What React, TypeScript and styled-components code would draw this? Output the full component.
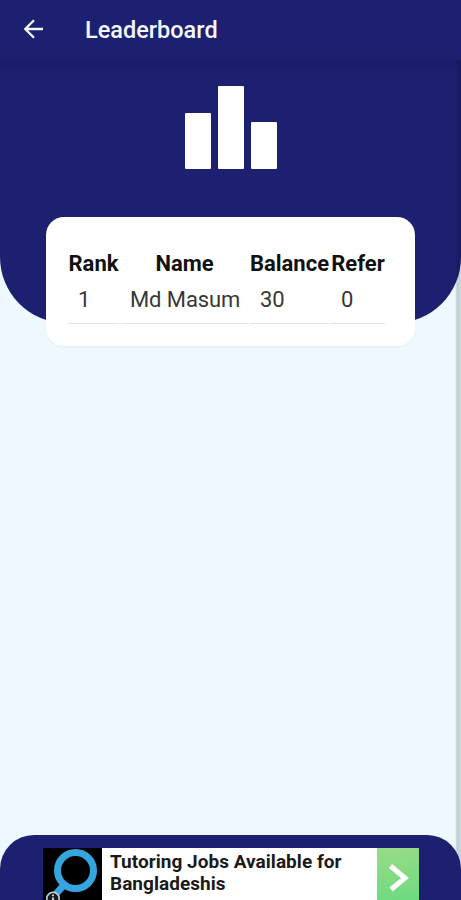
import React from "react";
import styled, { createGlobalStyle } from "styled-components";

const NAVY = "#1d1f70";

const GlobalStyle = createGlobalStyle`
  * { box-sizing: border-box; }
  body { margin: 0; background: #eef8ff; font-family: Roboto, sans-serif; overflow: hidden; }
`;

const Screen = styled.div`
  height: 900px;
  overflow: hidden;
  display: flex;
  flex-direction: column;
  background: linear-gradient(90deg, #eef8ff 455px, #c0d1d4 457px, #c9d9da 461px);
`;

const AppBar = styled.header`
  flex: none;
  height: 60px;
  display: flex;
  align-items: center;
  padding: 0 0 1px 22px;
  background: ${NAVY};
  color: #f3f7ff;
`;

const BackButton = styled.button`
  display: flex;
  padding: 0;
  margin: -2px 41px 0 0;
  border: 0;
  background: none;
  color: inherit;
`;

const Title = styled.h1`
  margin: 0;
  font-size: 23.5px;
  font-weight: 500;
  line-height: 28px;
`;

const Hero = styled.section`
  flex: none;
  height: 263px;
  padding-top: 26px;
  display: flex;
  justify-content: center;
  align-items: flex-start;
  border-radius: 0 0 66px 66px;
  background:
    linear-gradient(90deg, transparent 455px, rgba(15, 16, 70, 0.35) 458px),
    linear-gradient(180deg, #1b1d6b 0, ${NAVY} 14px);
`;

const Podium = styled.div`
  display: flex;
  align-items: flex-end;
  gap: 7px;
  height: 83px;
`;

const Bar = styled.span<{ $height: number }>`
  width: 26px;
  height: ${({ $height }) => $height}px;
  border-radius: 1px;
  background: #fff;
`;

const Card = styled.section`
  flex: none;
  width: 369px;
  height: 129px;
  margin: -106px 0 0 46px;
  padding: 32px 0 0 22px;
  border-radius: 18px;
  background: #fff;
  box-shadow: 0 1px 2px rgba(30, 60, 90, 0.05);
`;

const Columns = styled.div`
  display: grid;
  grid-template-columns: 51px 127px 79px 54px;
  column-gap: 2px;
`;

const HeadCell = styled.div`
  height: 29px;
  display: flex;
  justify-content: center;
  color: #111;
  font-size: 22px;
  font-weight: 700;
  line-height: 29px;
  white-space: nowrap;
`;

const Cell = styled.div<{ $inset: number }>`
  height: 46px;
  padding: 7px 0 0 ${({ $inset }) => $inset}px;
  border-bottom: 1px solid #e2e2e2;
  color: #383838;
  font-size: 22px;
  font-weight: 400;
  line-height: 30px;
  letter-spacing: -0.1px;
  white-space: nowrap;
`;

const Footer = styled.footer`
  flex: none;
  height: 65px;
  margin-top: auto;
  padding: 13px 42px 0 43px;
  border-radius: 34px 34px 0 0;
  background: ${NAVY};
`;

const Ad = styled.div`
  display: flex;
  height: 52px;
  background: #fff;
`;

const AdLogo = styled.div`
  flex: none;
  width: 59px;
  height: 52px;
  overflow: hidden;
  background: #000;
`;

const AdText = styled.p`
  flex: 1;
  margin: 0;
  padding: 3px 0 0 8px;
  color: #1a1a1a;
  font-size: 19px;
  font-weight: 700;
  line-height: 22px;
  letter-spacing: 0.03px;
  white-space: nowrap;
`;

const AdAction = styled.div`
  flex: none;
  width: 42px;
  background: linear-gradient(170deg, #9adb87, #6cdb80);
`;

const columns = [
  { name: "Rank", inset: 10 },
  { name: "Name", inset: 9 },
  { name: "Balance", inset: 10 },
  { name: "Refer", inset: 10 },
];
const entries = [["1", "Md Masum", "30", "0"]];

export default function App() {
  return (
    <Screen>
      <GlobalStyle />
      <AppBar>
        <BackButton aria-label="Back">
          <svg width="22" height="22" viewBox="0 0 22 22" fill="none" stroke="currentColor" strokeWidth="2.3">
            <path d="M21 11H3.5M12 2.3 3.3 11l8.7 8.7" />
          </svg>
        </BackButton>
        <Title>Leaderboard</Title>
      </AppBar>
      <Hero>
        <Podium>
          <Bar $height={56} />
          <Bar $height={83} />
          <Bar $height={47} />
        </Podium>
      </Hero>
      <Card>
        <Columns>
          {columns.map(({ name }) => (
            <HeadCell key={name}>{name}</HeadCell>
          ))}
          {entries.map((entry) =>
            entry.map((value, i) => (
              <Cell key={columns[i].name} $inset={columns[i].inset}>
                {value}
              </Cell>
            ))
          )}
        </Columns>
      </Card>
      <Footer>
        <Ad>
          <AdLogo>
            <svg width="59" height="52" viewBox="0 0 59 52" fill="none">
              <circle cx="32.5" cy="22.5" r="18" stroke="#35a5df" strokeWidth="7" />
              <path d="M20 38 13 46" stroke="#35a5df" strokeWidth="7" />
              <circle cx="10" cy="50.5" r="6.2" fill="#171b1f" stroke="#c6d2d8" strokeWidth="1.6" />
              <path d="M10 46.5v1.8M10 49.5v3" stroke="#dce5e8" strokeWidth="1.8" />
            </svg>
          </AdLogo>
          <AdText>
            Tutoring Jobs Available for
            <br />
            Bangladeshis
          </AdText>
          <AdAction>
            <svg width="42" height="52" viewBox="0 0 42 52" fill="none">
              <path d="M13.5 18 28 30 14 41.5" stroke="#fff" strokeWidth="5" />
            </svg>
          </AdAction>
        </Ad>
      </Footer>
    </Screen>
  );
}
